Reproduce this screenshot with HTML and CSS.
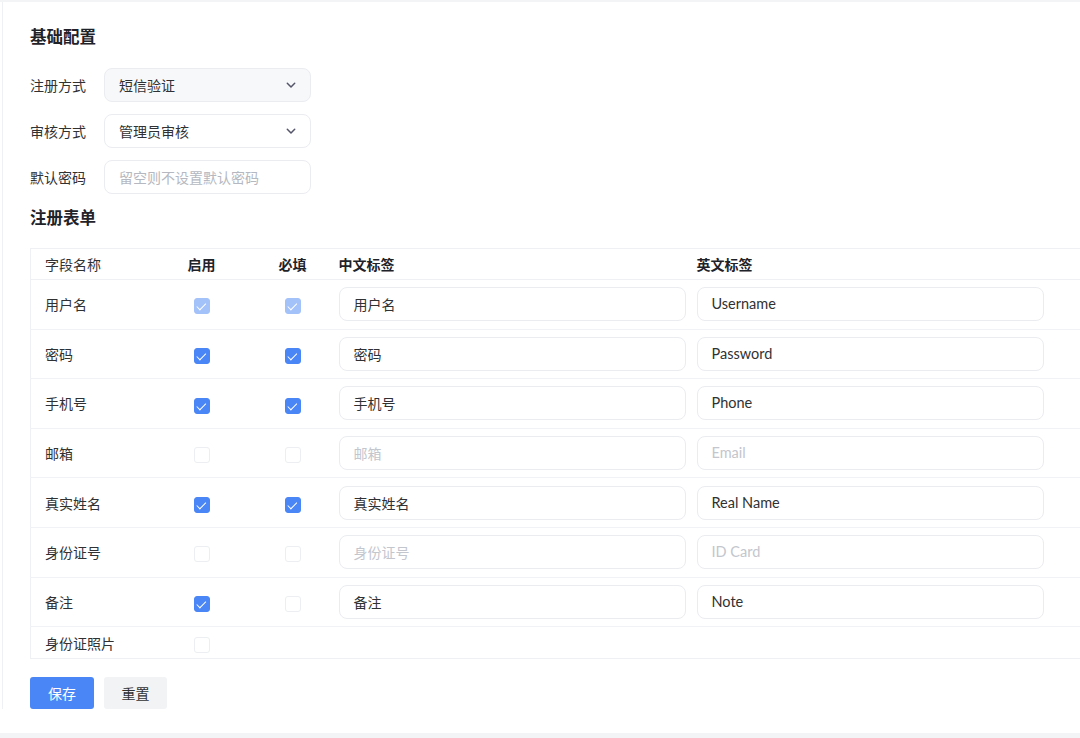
FILE: index.html
```html
<!DOCTYPE html>
<html lang="zh-CN">
<head>
<meta charset="utf-8">
<title>注册配置</title>
<link rel="stylesheet" href="styles.css">
</head>
<body>
<div class="page">
  <div class="panel">
    <h2 class="section-title">基础配置</h2>
    <div class="form">
      <div class="form-row">
        <label class="form-label">注册方式</label>
        <div class="select select-active"><span>短信验证</span><svg class="chev" viewBox="0 0 12 12" width="12" height="12"><path d="M2.3 4.3 L6 8 L9.7 4.3" fill="none" stroke="#55556a" stroke-width="1.5" stroke-linecap="round" stroke-linejoin="round"/></svg></div>
      </div>
      <div class="form-row">
        <label class="form-label">审核方式</label>
        <div class="select"><span>管理员审核</span><svg class="chev" viewBox="0 0 12 12" width="12" height="12"><path d="M2.3 4.3 L6 8 L9.7 4.3" fill="none" stroke="#55556a" stroke-width="1.5" stroke-linecap="round" stroke-linejoin="round"/></svg></div>
      </div>
      <div class="form-row">
        <label class="form-label">默认密码</label>
        <div class="input input-form placeholder">留空则不设置默认密码</div>
      </div>
    </div>

    <h2 class="section-title second">注册表单</h2>
    <div class="table-wrap">
      <table class="fields">
        <colgroup>
          <col class="c-name"><col class="c-on"><col class="c-req"><col class="c-zh"><col class="c-en">
        </colgroup>
        <thead>
          <tr><th class="name normal">字段名称</th><th class="center">启用</th><th class="center">必填</th><th class="zh">中文标签</th><th class="en">英文标签</th></tr>
        </thead>
        <tbody>
          <tr>
            <td class="name">用户名</td>
            <td class="center"><span class="cb checked dim"></span></td>
            <td class="center"><span class="cb checked dim"></span></td>
            <td class="zh"><div class="input">用户名</div></td>
            <td class="en"><div class="input latin">Username</div></td>
          </tr>
          <tr>
            <td class="name">密码</td>
            <td class="center"><span class="cb checked"></span></td>
            <td class="center"><span class="cb checked"></span></td>
            <td class="zh"><div class="input">密码</div></td>
            <td class="en"><div class="input latin">Password</div></td>
          </tr>
          <tr>
            <td class="name">手机号</td>
            <td class="center"><span class="cb checked"></span></td>
            <td class="center"><span class="cb checked"></span></td>
            <td class="zh"><div class="input">手机号</div></td>
            <td class="en"><div class="input latin">Phone</div></td>
          </tr>
          <tr>
            <td class="name">邮箱</td>
            <td class="center"><span class="cb off"></span></td>
            <td class="center"><span class="cb off"></span></td>
            <td class="zh"><div class="input disabled">邮箱</div></td>
            <td class="en"><div class="input latin disabled">Email</div></td>
          </tr>
          <tr>
            <td class="name">真实姓名</td>
            <td class="center"><span class="cb checked"></span></td>
            <td class="center"><span class="cb checked"></span></td>
            <td class="zh"><div class="input">真实姓名</div></td>
            <td class="en"><div class="input latin">Real Name</div></td>
          </tr>
          <tr>
            <td class="name">身份证号</td>
            <td class="center"><span class="cb off"></span></td>
            <td class="center"><span class="cb off"></span></td>
            <td class="zh"><div class="input disabled">身份证号</div></td>
            <td class="en"><div class="input latin disabled">ID Card</div></td>
          </tr>
          <tr>
            <td class="name">备注</td>
            <td class="center"><span class="cb checked"></span></td>
            <td class="center"><span class="cb off"></span></td>
            <td class="zh"><div class="input">备注</div></td>
            <td class="en"><div class="input latin">Note</div></td>
          </tr>
          <tr class="short">
            <td class="name">身份证照片</td>
            <td class="center"><span class="cb off"></span></td>
            <td></td>
            <td></td>
            <td></td>
          </tr>
        </tbody>
      </table>
    </div>

    <div class="actions">
      <button class="btn primary">保存</button>
      <button class="btn">重置</button>
    </div>
  </div>
</div>
</body>
</html>
```

FILE: styles.css
```css
* { box-sizing: border-box; }
html, body { margin: 0; padding: 0; }
body {
  background: #f3f4f6;
  font-family: "Noto Sans CJK SC", "Noto Sans", sans-serif;
  font-size: 14px;
  color: #303133;
  width: 1080px;
  height: 738px;
  overflow: hidden;
}
.page {
  margin-top: 2px;
  height: 731px;
  background: #fff;
  padding-left: 2px;
  overflow: hidden;
}
.panel {
  border-left: 1px solid #eef0f3;
  padding: 22px 0 0 27px;
}
.section-title {
  margin: 0 0 20px;
  font-size: 16.5px;
  line-height: 24px;
  font-weight: 700;
  color: #1f2329;
}
.section-title.second {
  margin: 11px 0 19px;
}
.form { display: flex; flex-direction: column; gap: 12px; }
.form-row { display: flex; align-items: center; height: 34px; }
.form-label { width: 74px; line-height: 34px; color: #303133; }
.select, .input {
  height: 34px;
  border: 1px solid #ebecf0;
  border-radius: 8px;
  background: #fff;
  display: flex;
  align-items: center;
  padding: 0 14px;
  color: #303133;
  line-height: 20px;
}
.select { width: 207px; justify-content: space-between; padding-right: 13px; }
.select-active { background: #f7f8fa; }
.chev { display: block; }
.input-form { width: 207px; }
.placeholder { color: #b5b8c0; }

.table-wrap { width: 1100px; }
.fields {
  width: 1100px;
  border-collapse: collapse;
  table-layout: fixed;
  border: 1px solid #eef0f3;
}
.c-name { width: 126px; }
.c-on { width: 90px; }
.c-req { width: 92px; }
.c-zh { width: 352px; }
.c-en { width: auto; }
.fields th {
  font-weight: 700;
  text-align: left;
  padding: 5px 0;
  line-height: 20px;
  height: 31px;
  color: #1f2329;
  border-bottom: 1px solid #eef0f3;
}
.fields th.normal { font-weight: 400; color: #303133; }
.fields td {
  padding-top: 7.3px;
  padding-bottom: 7.3px;
  border-bottom: 1px solid #f1f2f5;
  vertical-align: middle;
}
.fields tr:last-child td { border-bottom: none; }
.fields tr.short td { padding-top: 0; padding-bottom: 0; height: 32px; }
.fields .name { padding-left: 14px; }
.fields .center { text-align: center; }
.fields .zh { padding-left: 0; }
.fields .en { padding-left: 6px; }
.fields td.zh .input, .fields td.en .input { width: 347px; }
.latin { font-family: Lato, "Noto Sans CJK SC", sans-serif; font-size: 14.5px; }
.input.disabled { color: #c3c6cd; }

.cb {
  display: inline-block;
  vertical-align: middle;
  width: 16px;
  height: 16px;
  border-radius: 3px;
  border: 1px solid #eceef2;
  background: #fff;
  position: relative;
}
.cb.checked {
  background: #4a86f5;
  border-color: #4a86f5;
}
.cb.checked.dim {
  background: #a3c2fa;
  border-color: #a3c2fa;
}
.cb.checked::after {
  content: "";
  position: absolute;
  left: 4.5px;
  top: 2px;
  width: 4px;
  height: 7.5px;
  border: solid #fff;
  border-width: 0 1.8px 1.8px 0;
  transform: rotate(45deg);
}

.actions { display: flex; gap: 10px; margin-top: 18px; }
.btn {
  height: 32px;
  padding: 0 16px;
  border: none;
  border-radius: 3px;
  background: #f2f3f5;
  color: #303133;
  font-family: "Noto Sans CJK SC", sans-serif;
  font-size: 14px;
  width: 63px;
}
.btn.primary { background: #4a86f5; color: #fff; width: 64px; }
```
